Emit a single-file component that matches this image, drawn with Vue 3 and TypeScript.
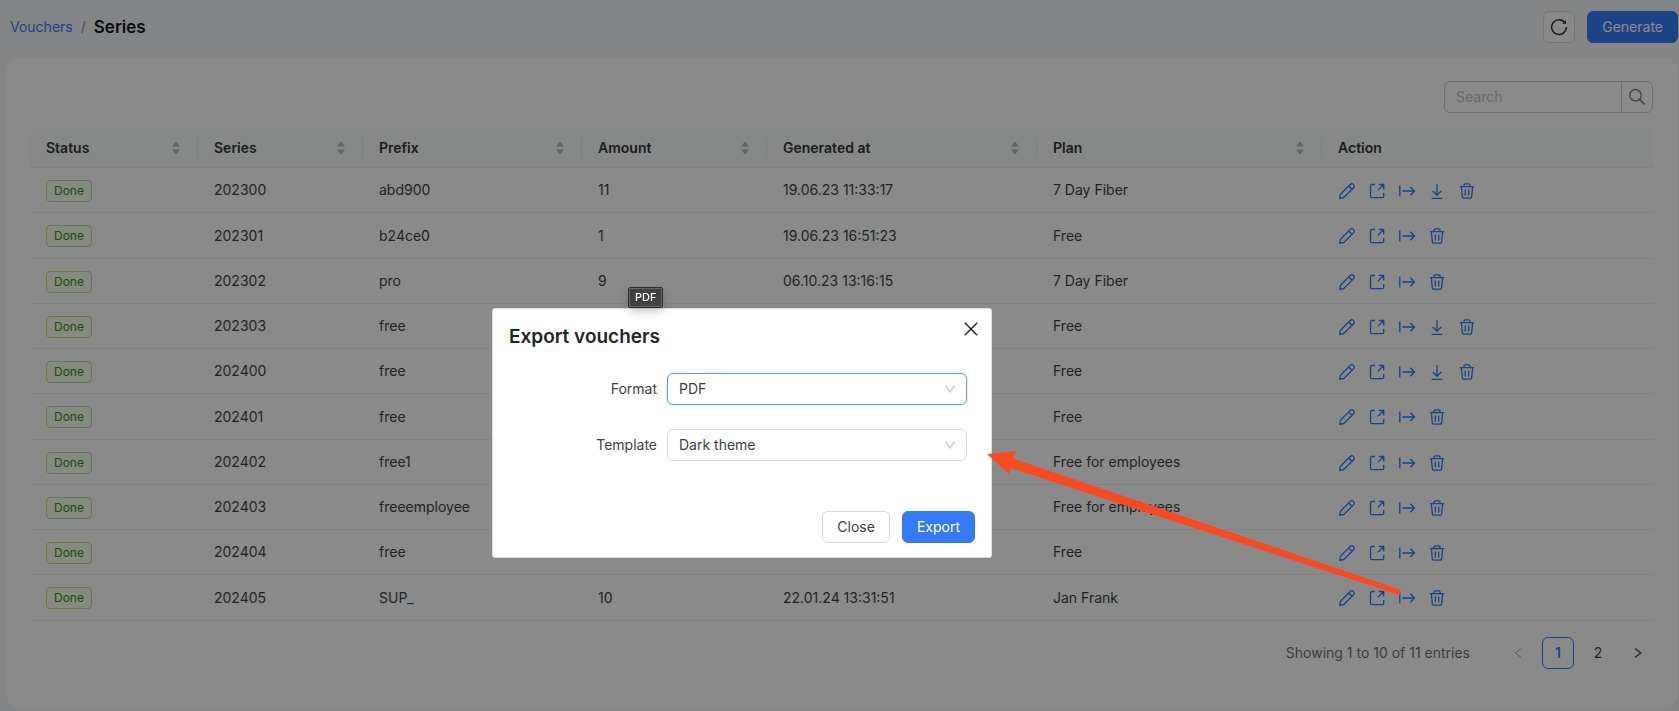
<script setup lang="ts">
import { ref } from 'vue'

type IconName = 'edit' | 'open' | 'export' | 'download' | 'delete'

interface Voucher {
  series: string
  prefix: string
  amount: string
  generated: string
  plan: string
  download?: boolean
}

const columns = [
  { key: 'status', title: 'Status' },
  { key: 'series', title: 'Series' },
  { key: 'prefix', title: 'Prefix' },
  { key: 'amount', title: 'Amount' },
  { key: 'generated', title: 'Generated at' },
  { key: 'plan', title: 'Plan' },
]

const rows: Voucher[] = [
  { series: '202300', prefix: 'abd900', amount: '11', generated: '19.06.23 11:33:17', plan: '7 Day Fiber', download: true },
  { series: '202301', prefix: 'b24ce0', amount: '1', generated: '19.06.23 16:51:23', plan: 'Free' },
  { series: '202302', prefix: 'pro', amount: '9', generated: '06.10.23 13:16:15', plan: '7 Day Fiber' },
  { series: '202303', prefix: 'free', amount: '', generated: '', plan: 'Free', download: true },
  { series: '202400', prefix: 'free', amount: '', generated: '', plan: 'Free', download: true },
  { series: '202401', prefix: 'free', amount: '', generated: '', plan: 'Free' },
  { series: '202402', prefix: 'free1', amount: '', generated: '', plan: 'Free for employees' },
  { series: '202403', prefix: 'freeemployee', amount: '', generated: '', plan: 'Free for employees' },
  { series: '202404', prefix: 'free', amount: '', generated: '', plan: 'Free' },
  { series: '202405', prefix: 'SUP_', amount: '10', generated: '22.01.24 13:31:51', plan: 'Jan Frank' },
]

const icons: Record<IconName, string> = {
  edit: 'M1.700 16.300L2.500 12.200 12.200 2.500a2.300 2.300 0 0 1 3.300 3.300L5.800 15.500zM10.700 4l3.300 3.300',
  open: 'M7 2.5H3.9a1.4 1.4 0 0 0-1.4 1.4v10.400a1.4 1.4 0 0 0 1.4 1.4h10.400a1.4 1.4 0 0 0 1.4-1.4V11M9.8 8.4l5.6-5.6M10.800 2.5h4.900v4.900',
  export: 'M1.800 3.500v11M4.500 9h12M12.300 4.800L16.500 9l-4.200 4.200',
  download: 'M9 2v11M4.800 9L9 13.200 13.200 9M3.600 16.400h10.800',
  delete: 'M1.800 4.600h14.400M6 4.400V3.100c0-.8.5-1.3 1.3-1.3h3.400c.8 0 1.3.5 1.3 1.3v1.3M3.400 4.800l.9 10c.1.8.6 1.4 1.5 1.4h6.4c.9 0 1.4-.6 1.5-1.4l.9-10M7.300 7.600v5.800M10.700 7.600v5.800',
}

const labels: Record<IconName, string> = {
  edit: 'Edit',
  open: 'Open',
  export: 'Export',
  download: 'Download',
  delete: 'Delete',
}

function actionsFor(row: Voucher): IconName[] {
  return row.download
    ? ['edit', 'open', 'export', 'download', 'delete']
    : ['edit', 'open', 'export', 'delete']
}

const search = ref('')
const format = ref('PDF')
const template = ref('Dark theme')
const modalOpen = ref(true)
</script>

<template>
  <div class="page">
    <header class="topbar">
      <nav class="crumbs" aria-label="Breadcrumb">
        <a href="#vouchers">Vouchers</a>
        <span class="slash">/</span>
        <h1>Series</h1>
      </nav>
      <div class="tools">
        <button class="btn square" type="button" aria-label="Refresh">
          <svg width="18" height="18" viewBox="0 0 18 18" fill="none" stroke="currentColor" stroke-width="1.5">
            <path d="M15.3 5.2A7.4 7.4 0 1 0 16.4 9" />
            <path d="M16 1.9v3.9h-3.9z" fill="currentColor" stroke="none" />
          </svg>
        </button>
        <button class="btn primary" type="button">Generate</button>
      </div>
    </header>

    <main class="card">
      <form class="search" role="search" @submit.prevent>
        <input v-model="search" type="text" placeholder="Search" aria-label="Search" />
        <button type="submit" aria-label="Run search">
          <svg width="18" height="18" viewBox="0 0 18 18" fill="none" stroke="currentColor" stroke-width="1.3">
            <circle cx="7.5" cy="7.2" r="5.7" />
            <path d="M11.6 11.4l5 5" stroke-width="1.6" />
          </svg>
        </button>
      </form>

      <table>
        <colgroup>
          <col class="c-status" />
          <col class="c-series" />
          <col class="c-prefix" />
          <col class="c-amount" />
          <col class="c-generated" />
          <col class="c-plan" />
          <col />
        </colgroup>
        <thead>
          <tr>
            <th v-for="col in columns" :key="col.key" scope="col">
              <div class="head">
                <span>{{ col.title }}</span>
                <svg width="8" height="14" viewBox="0 0 8 14" fill="currentColor" aria-hidden="true">
                  <path d="M4 0.4l4 5.200H0zM4 13.600l4-5.200H0z" />
                </svg>
              </div>
            </th>
            <th scope="col">Action</th>
          </tr>
        </thead>
        <tbody>
          <tr v-for="row in rows" :key="row.series">
            <td><span class="tag">Done</span></td>
            <td>{{ row.series }}</td>
            <td>{{ row.prefix }}</td>
            <td>{{ row.amount }}</td>
            <td>{{ row.generated }}</td>
            <td>{{ row.plan }}</td>
            <td>
              <div class="actions">
                <button v-for="name in actionsFor(row)" :key="name" type="button" :aria-label="labels[name]">
                  <svg width="18" height="18" viewBox="0 0 18 18" fill="none" stroke="currentColor" stroke-width="1.3" stroke-linejoin="round">
                    <path :d="icons[name]" />
                  </svg>
                </button>
              </div>
            </td>
          </tr>
        </tbody>
      </table>

      <footer class="pager">
        <span class="total">Showing 1 to 10 of 11 entries</span>
        <button type="button" class="page-btn off" aria-label="Previous page" disabled>
          <svg width="8" height="10" viewBox="0 0 8 10" fill="none" stroke="currentColor" stroke-width="1.1">
            <path d="M7 .6L1.2 5 7 9.4" />
          </svg>
        </button>
        <button type="button" class="page-btn current" aria-current="page">1</button>
        <button type="button" class="page-btn">2</button>
        <button type="button" class="page-btn" aria-label="Next page">
          <svg width="8" height="10" viewBox="0 0 8 10" fill="none" stroke="currentColor" stroke-width="1.3">
            <path d="M1 .6L6.8 5 1 9.4" />
          </svg>
        </button>
      </footer>
    </main>

    <div v-if="modalOpen" class="mask">
      <section class="modal" role="dialog" aria-labelledby="modal-title">
        <span class="tip" role="tooltip">PDF</span>
        <header class="modal-head">
          <h2 id="modal-title">Export vouchers</h2>
          <button class="x" type="button" aria-label="Close dialog" @click="modalOpen = false">
            <svg width="14" height="14" viewBox="0 0 14 14" fill="none" stroke="currentColor" stroke-width="1.4">
              <path d="M.8.8l12.4 12.4M13.2.8L.8 13.2" />
            </svg>
          </button>
        </header>
        <form class="fields" @submit.prevent>
          <label for="format">Format</label>
          <div class="select active">
            <select id="format" v-model="format">
              <option>PDF</option>
              <option>CSV</option>
            </select>
            <svg width="10" height="8" viewBox="0 0 10 8" fill="none" stroke="currentColor" stroke-width="1.1">
              <path d="M.5.6L5 7 9.5.6" />
            </svg>
          </div>
          <label for="template">Template</label>
          <div class="select">
            <select id="template" v-model="template">
              <option>Dark theme</option>
              <option>Light theme</option>
            </select>
            <svg width="10" height="8" viewBox="0 0 10 8" fill="none" stroke="currentColor" stroke-width="1.1">
              <path d="M.5.6L5 7 9.5.6" />
            </svg>
          </div>
        </form>
        <footer class="modal-foot">
          <button class="btn" type="button" @click="modalOpen = false">Close</button>
          <button class="btn primary" type="button">Export</button>
        </footer>
        <svg class="pointer" width="416" height="148" viewBox="0 0 416 148" aria-hidden="true">
          <path d="M0 5L29.5 2 26 9.500 414 141 412.500 146 23.500 19 22 25z" fill="#f84a22" />
        </svg>
      </section>
    </div>
  </div>
</template>

<style>
body {
  margin: 0;
  background: #f0f2f6;
}
</style>

<style scoped>
.page {
  box-sizing: border-box;
  min-height: 100vh;
  padding: 0 1px 2px 6px;
  overflow: hidden;
  color: #3a3f42;
  font: 14px/22px Inter, "Liberation Sans", sans-serif;
}

button,
input,
select {
  font: inherit;
  color: inherit;
}

button {
  cursor: pointer;
}

svg {
  display: block;
}

.topbar {
  display: flex;
  align-items: center;
  justify-content: space-between;
  height: 54px;
  padding: 0 0 3px 4px;
}

.crumbs {
  display: flex;
  align-items: center;
  gap: 8px;
}

.crumbs a {
  color: #3578f0;
  text-decoration: none;
}

.slash {
  color: #85888c;
}

h1 {
  margin: 0;
  color: #111417;
  font-size: 17px;
  font-weight: 600;
  line-height: 24px;
}

.tools {
  display: flex;
  gap: 12px;
}

.btn {
  box-sizing: border-box;
  height: 32px;
  padding: 0 14px;
  border: 1px solid #d5d7d9;
  border-radius: 6px;
  background: #fff;
}

.btn.square {
  display: grid;
  place-items: center;
  width: 32px;
  padding: 0;
  color: #333;
}

.btn.primary {
  border-color: #347af4;
  background: #347af4;
  color: #fff;
}

.topbar .btn.square {
  background: #fafafa;
}

.card {
  box-sizing: border-box;
  min-height: calc(100vh - 59px);
  padding: 24px 24px 40px;
  border-radius: 16px;
  background: #fcfcfc;
}

.search {
  box-sizing: border-box;
  display: flex;
  width: 209px;
  height: 32px;
  margin: 0 1px 16px auto;
  border: 1px solid #c6c8ca;
  border-radius: 6px;
}

.search input {
  flex: 1;
  min-width: 0;
  padding: 0 11px;
  border: 0;
  outline: 0;
  background: none;
}

.search input::placeholder {
  color: #bbbdbf;
  opacity: 1;
}

.search button {
  display: grid;
  place-items: center;
  width: 31px;
  padding: 0;
  border: 0;
  border-left: 1px solid #c6c8ca;
  background: none;
  color: #777;
}

table {
  width: 100%;
  border-spacing: 0;
  table-layout: fixed;
}

.c-status { width: 168px; }
.c-series { width: 165px; }
.c-prefix { width: 219px; }
.c-amount { width: 185px; }
.c-generated { width: 270px; }
.c-plan { width: 285px; }

th,
td {
  box-sizing: border-box;
  padding: 0 16px;
  border-bottom: 1px solid #eceeee;
  text-align: left;
}

th {
  height: 39px;
  background: #f5f9f7;
  color: #303436;
  font-weight: 600;
}

th:first-child {
  border-radius: 6px 0 0 0;
}

th:last-child {
  border-radius: 0 6px 0 0;
}

.head {
  display: flex;
  align-items: center;
  justify-content: space-between;
  margin-right: -16px;
  padding-right: 17px;
  border-right: 1px solid #e6eae8;
}

.head svg {
  color: #b4b7b6;
}

td {
  height: 45px;
}

tbody tr:nth-child(4n + 2) td {
  height: 46px;
}

.tag {
  display: block;
  box-sizing: border-box;
  width: max-content;
  margin-top: 1px;
  padding: 0 7px;
  border: 1px solid #b0e08c;
  border-radius: 4px;
  background: #f4fbe9;
  color: #2f8f14;
  font-size: 12px;
  line-height: 20px;
}

.actions {
  display: flex;
  gap: 12px;
  padding-top: 1px;
}

.actions button {
  padding: 0;
  border: 0;
  background: none;
  color: #2f74ee;
}

.pager {
  display: flex;
  align-items: center;
  justify-content: flex-end;
  gap: 8px;
  margin-top: 16px;
}

.total {
  margin-right: 24px;
  color: #6a6e72;
}

.page-btn {
  box-sizing: border-box;
  display: grid;
  place-items: center;
  width: 32px;
  height: 32px;
  padding: 0;
  border: 1px solid transparent;
  border-radius: 6px;
  background: none;
}

.page-btn.off {
  color: #b4b6b8;
}

.page-btn.current {
  border-color: #2f74ee;
  color: #2f74ee;
  font-weight: 600;
}

.mask {
  position: fixed;
  inset: 0;
  background: rgba(0, 0, 0, 0.45);
}

.modal {
  box-sizing: border-box;
  position: absolute;
  top: 308px;
  left: 492px;
  width: 500px;
  padding: 13px 16px 14px;
  border: 1px solid #d8dce6;
  border-radius: 3px;
  background: #fff;
}

.modal-head {
  display: flex;
  justify-content: space-between;
}

h2 {
  margin: 0;
  color: #202528;
  font-size: 19px;
  font-weight: 600;
  line-height: 30px;
}

.x {
  align-self: flex-start;
  margin-right: -3px;
  padding: 0;
  border: 0;
  background: none;
}

.x svg {
  color: #222;
}

.fields {
  display: grid;
  grid-template-columns: 1fr 300px;
  gap: 24px 10px;
  align-items: center;
  margin: 21px 8px 50px 0;
}

.fields label {
  text-align: right;
}

.select {
  display: grid;
  align-items: center;
}

.select select,
.select svg {
  grid-area: 1 / 1;
}

.select select {
  box-sizing: border-box;
  width: 100%;
  height: 32px;
  padding: 0 11px;
  border: 1px solid #d9d9d9;
  border-radius: 6px;
  outline: 0;
  background: #fff;
  appearance: none;
}

.select svg {
  justify-self: end;
  margin-right: 12px;
  color: #bfbfbf;
  pointer-events: none;
}

.select.active select {
  border-color: #5b9bff;
  box-shadow: 0 0 0 1px #eaf3ff;
}

.modal-foot {
  display: flex;
  justify-content: flex-end;
  gap: 12px;
}

.tip {
  position: absolute;
  bottom: calc(100% + 2px);
  left: 136px;
  padding: 0 5px;
  border: 1px solid #666;
  border-radius: 1px;
  outline: 1px solid #2c2c2c;
  background: #404040;
  color: #fff;
  font-size: 11px;
  font-weight: 500;
  line-height: 17px;
  box-shadow: 0 4px 10px rgba(0, 0, 0, 0.25);
}

.pointer {
  position: absolute;
  top: 140px;
  left: 494px;
}
</style>
